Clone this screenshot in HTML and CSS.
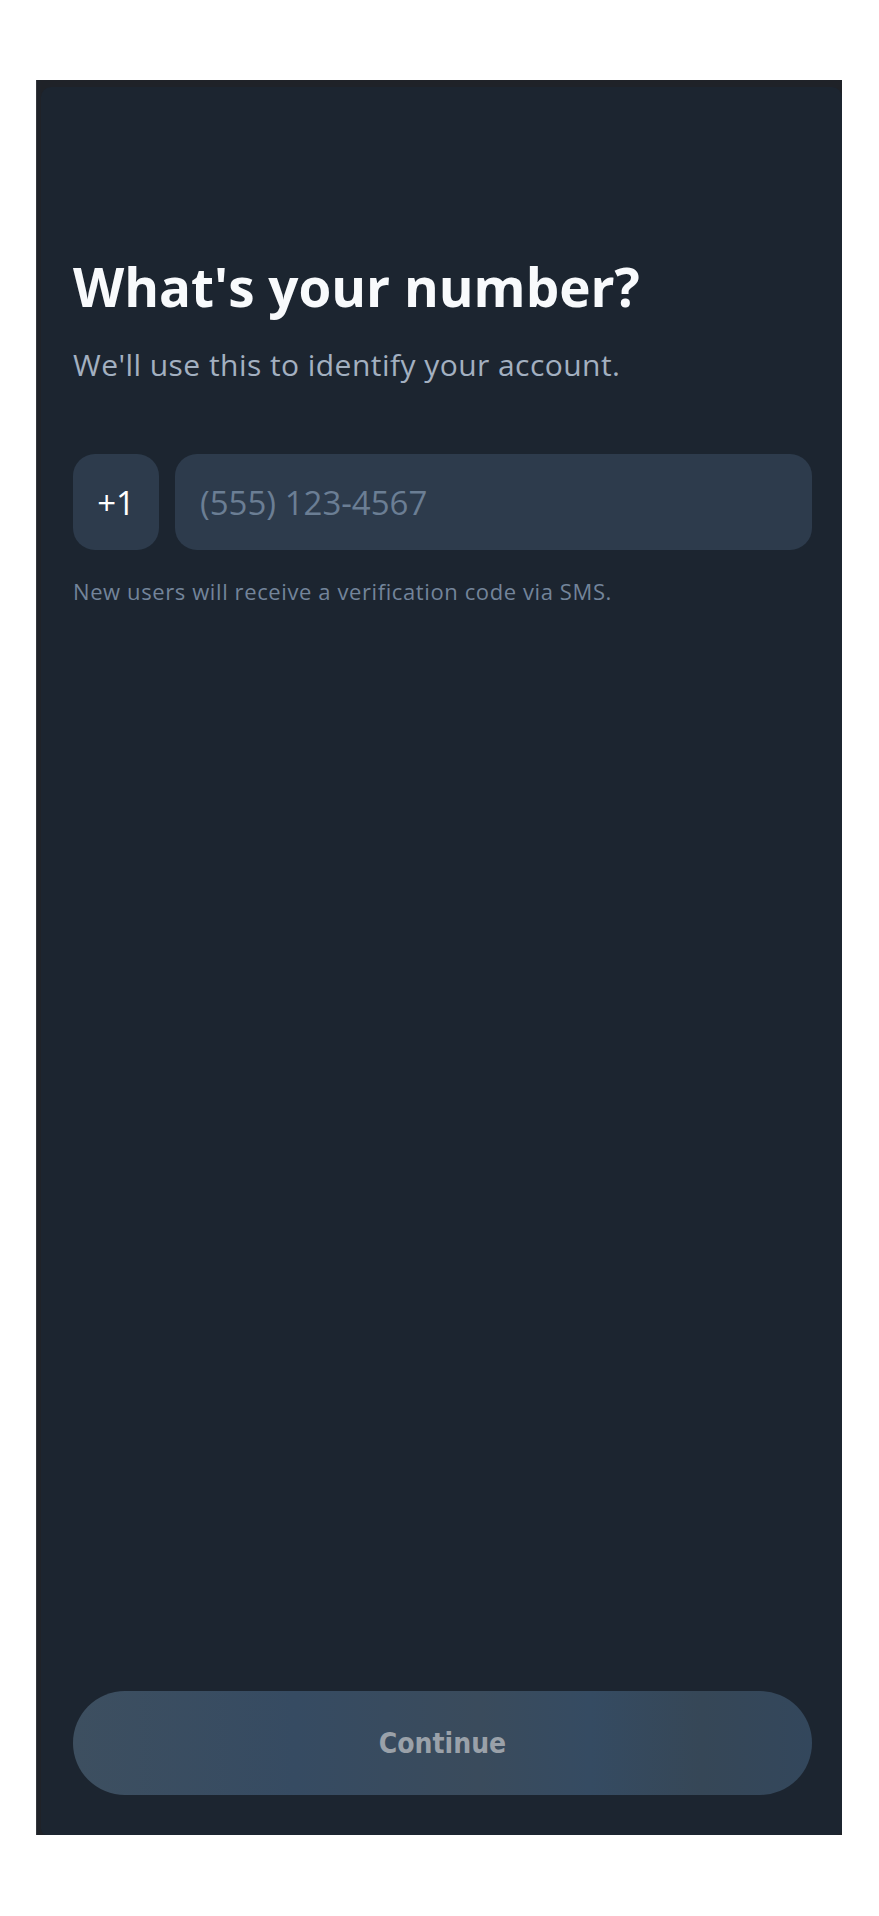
FILE: index.html
```html
<!DOCTYPE html>
<html lang="en">
<head>
    <meta charset="UTF-8">
    <meta name="viewport" content="width=device-width, initial-scale=1.0">
    <title>Phone Login</title>
    <link rel="stylesheet" href="styles.css">
</head>
<body>
    <div class="page">
        <div class="frame">
            <div class="screen">
                <h1 class="login-title">What's your number?</h1>
                <p class="login-subtitle">We'll use this to identify your account.</p>
                <div class="phone-row">
                    <div class="phone-code">+1</div>
                    <input class="phone-input" type="tel" placeholder="(555) 123-4567">
                </div>
                <p class="login-hint">New users will receive a verification code via SMS.</p>
                <button class="login-btn" type="button" disabled>Continue</button>
            </div>
        </div>
    </div>
</body>
</html>
```

FILE: styles.css
```css
body {
    margin: 0;
    background: #ffffff;
}
.page {
    padding: 80px 37px 81px 36px;
}
.frame {
    height: 1755px;
    box-sizing: border-box;
    padding: 7px 0 0 4px;
    background: #1f2228;
    border-left: 1px solid #34373d;
}
.screen {
    height: 100%;
    box-sizing: border-box;
    display: flex;
    flex-direction: column;
    padding: 0 30px 40px 32px;
    background: #1c2530;
    border-radius: 10px 10px 6px 6px;
    font-family: "Open Sans", "Lato", sans-serif;
}
.login-title {
    margin: 168px 0 0;
    font-size: 53px;
    font-weight: 700;
    line-height: 1.2;
    color: #f8fafc;
}
.login-subtitle {
    margin: 27px 0 0;
    font-size: 30px;
    line-height: 1.26;
    letter-spacing: 0.45px;
    color: #a3b0c0;
}
.phone-row {
    display: flex;
    gap: 16px;
    margin-top: 71px;
}
.phone-code {
    width: 86px;
    height: 96px;
    display: flex;
    align-items: center;
    justify-content: center;
    background: #2d3b4c;
    border-radius: 22px;
    font-size: 33px;
    color: #ffffff;
}
.phone-input {
    flex: 1;
    height: 96px;
    box-sizing: border-box;
    padding: 0 25px;
    background: #2d3b4c;
    border: none;
    border-radius: 22px;
    font-family: inherit;
    font-size: 33px;
    color: #ffffff;
    outline: none;
}
.phone-input::placeholder {
    color: #6b7e94;
}
.login-hint {
    margin: 26px 0 0;
    font-size: 22px;
    letter-spacing: 0.6px;
    color: #73849a;
}
.login-btn {
    margin-top: auto;
    height: 104px;
    border: none;
    border-radius: 52px;
    background: linear-gradient(90deg, #3d4f60 0%, #364b62 30%, #3a4b5c 55%, #354b62 70%, #364757 85%, #33475c 100%);
    font-family: "DejaVu Sans Condensed", "DejaVu Sans", sans-serif;
    font-stretch: condensed;
    font-size: 28px;
    font-weight: 600;
    color: #9aa1a9;
}
```
